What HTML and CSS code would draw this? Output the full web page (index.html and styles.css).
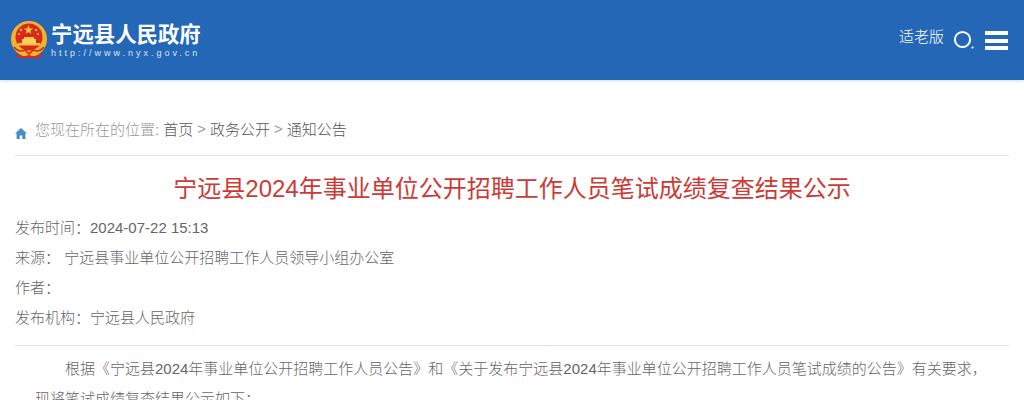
FILE: index.html

```html
<!DOCTYPE html>
<html lang="zh-CN">
<head>
    <meta charset="UTF-8">
    <title>宁远县2024年事业单位公开招聘工作人员笔试成绩复查结果公示</title>
    <link rel="stylesheet" href="styles.css">
</head>
<body>
    <div class="header">
        <div class="logo">
            <svg class="emblem" width="38" height="40" viewBox="0 0 38 40">
                <circle cx="19" cy="19" r="18" fill="#f0b52c"/>
                <circle cx="19" cy="17" r="13.5" fill="#d9281e"/>
                <polygon points="18.5,5 19.7,8.5 23.3,8.5 20.4,10.7 21.5,14 18.5,12 15.5,14 16.6,10.7 13.7,8.5 17.3,8.5" fill="#f5c83a"/>
                <circle cx="11" cy="10" r="1.2" fill="#f5c83a"/>
                <circle cx="9" cy="14" r="1.1" fill="#f5c83a"/>
                <circle cx="26" cy="10" r="1.2" fill="#f5c83a"/>
                <circle cx="28" cy="14" r="1.1" fill="#f5c83a"/>
                <rect x="8" y="23" width="22" height="2.5" fill="#f5c83a"/>
                <rect x="12" y="19" width="14" height="4" fill="#f3d26a"/>
                <rect x="14" y="17" width="10" height="2" fill="#f5c83a"/>
                <path d="M4 27 Q9 33 15 30 L19 34 L23 30 Q29 33 34 27" fill="none" stroke="#d9281e" stroke-width="1.6"/>
                <path d="M5 33 Q12 38 19 35 Q26 38 33 33 L30 38 L8 38 Z" fill="#d9281e"/>
            </svg>
            <div class="logo-text">
                <div class="logo-name">宁远县人民政府</div>
                <div class="logo-url">http://www.nyx.gov.cn</div>
            </div>
        </div>
        <div class="tools">
            <span class="elder">适老版</span>
            <svg class="icon-search" width="22" height="22" viewBox="0 0 22 22">
                <circle cx="9.5" cy="9.5" r="7.6" fill="none" stroke="#fff" stroke-width="2"/>
                <circle cx="19.5" cy="17.5" r="1.1" fill="#fff"/>
            </svg>
            <div class="menu-btn"><i></i><i></i><i></i></div>
        </div>
    </div>

    <div class="content">
        <div class="crumb">
            <svg class="icon-home" width="12" height="11" viewBox="0 0 12 11">
                <path d="M6 0 L12 5.6 L10.4 5.6 L10.4 11 L7.3 11 L7.3 7.4 L4.7 7.4 L4.7 11 L1.6 11 L1.6 5.6 L0 5.6 Z" fill="#4a8dc0"/>
            </svg>
            <span class="crumb-label">您现在所在的位置:</span>
            <a>首页</a><span class="crumb-sep">&gt;</span><a>政务公开</a><span class="crumb-sep">&gt;</span><a>通知公告</a>
        </div>

        <h1 class="title">宁远县2024年事业单位公开招聘工作人员笔试成绩复查结果公示</h1>

        <div class="meta">
            <div class="meta-row">发布时间：2024-07-22 15:13</div>
            <div class="meta-row">来源： 宁远县事业单位公开招聘工作人员领导小组办公室</div>
            <div class="meta-row">作者：</div>
            <div class="meta-row">发布机构：宁远县人民政府</div>
        </div>

        <div class="article">
            <p>根据《宁远县2024年事业单位公开招聘工作人员公告》和《关于发布宁远县2024年事业单位公开招聘工作人员笔试成绩的公告》有关要求，现将笔试成绩复查结果公示如下：</p>
        </div>
    </div>
</body>
</html>
```

FILE: styles.css

```css
* { margin: 0; padding: 0; box-sizing: border-box; }
html, body {
    height: 400px;
    overflow: hidden;
}
body {
    font-family: "Liberation Sans", "Noto Sans CJK SC", sans-serif;
    font-weight: 300;
    background: #fff;
    color: #666;
}
.header {
    height: 80px;
    background: #2467b7;
    box-shadow: 0 1px 3px rgba(0,0,0,0.15);
    display: flex;
    justify-content: space-between;
    padding: 0 16px 0 10px;
}
.logo {
    display: flex;
    align-items: flex-start;
    padding-top: 20px;
}
.logo-text {
    margin-left: 3px;
    color: #fff;
}
.logo-name {
    font-size: 21.4px;
    line-height: 30px;
    font-weight: 700;
}
.logo-url {
    font-size: 9px;
    line-height: 10px;
    letter-spacing: 3px;
    color: #dbe6f3;
    margin-top: -2px;
}
.tools {
    display: flex;
    align-items: flex-start;
    padding-top: 28px;
}
.elder {
    font-size: 15px;
    line-height: 18px;
    color: #fff;
}
.icon-search {
    margin: 2px 0 0 9px;
}
.menu-btn {
    width: 23px;
    margin: 3px 0 0 10px;
}
.menu-btn i {
    display: block;
    height: 4px;
    background: #fff;
    margin-bottom: 3.5px;
}
.content {
    padding: 0 15px;
}
.crumb {
    display: flex;
    align-items: center;
    height: 76px;
    padding-top: 22px;
    border-bottom: 1px solid #e5e5e5;
    font-size: 15px;
    color: #555;
}
.icon-home {
    margin: 9px 8px 0 0;
}
.crumb-label {
    color: #999;
    margin-right: 4px;
}
.crumb-sep {
    color: #999;
    margin: 0 4px;
}
.title {
    font-size: 24px;
    font-weight: 400;
    line-height: 34px;
    color: #cc3a36;
    text-align: center;
    margin-top: 16px;
}
.meta {
    margin-top: 7px;
    padding-bottom: 12px;
    border-bottom: 1px solid #e5e5e5;
}
.meta-row {
    font-size: 15px;
    line-height: 30px;
}
.article {
    margin-top: 8px;
    font-size: 15px;
    line-height: 30px;
}
.article p {
    text-indent: 30px;
    padding: 0 20px;
}
```
